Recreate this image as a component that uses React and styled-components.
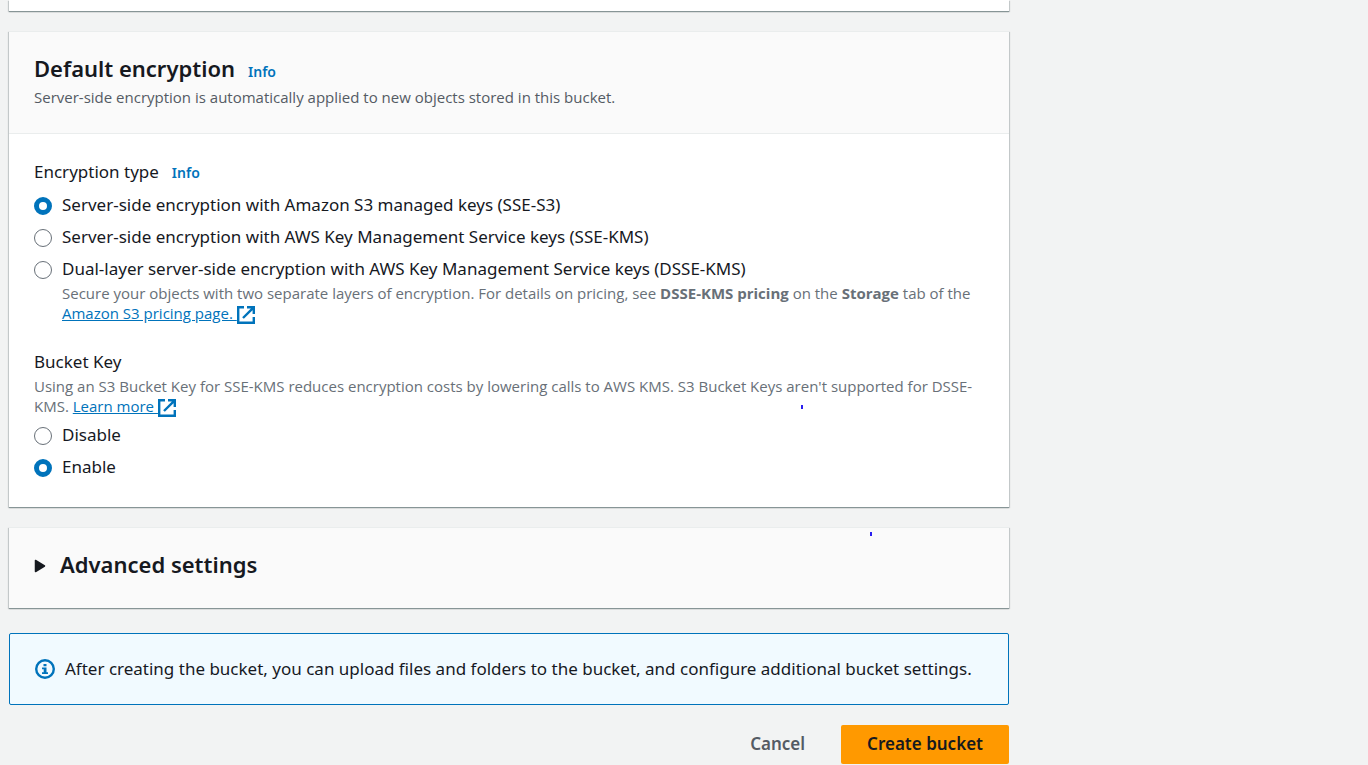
import React, {useState} from 'react'
import styled, {createGlobalStyle} from 'styled-components'

const App = () => {
    const [encryption, setEncryption] = useState('sse-s3')
    const [bucketKey, setBucketKey] = useState('enable')

    return (
        <Page>
            <GlobalStyle />
            <Content>
                <PreviousCard />
                <Card>
                    <CardHeader>
                        <TitleRow>
                            <Title>Default encryption</Title>
                            <InfoLink href='#encryption-info'>Info</InfoLink>
                        </TitleRow>
                        <Subtitle>Server-side encryption is automatically applied to new objects stored in this bucket.</Subtitle>
                    </CardHeader>
                    <CardBody>
                        <Group>
                            <LegendRow>
                                Encryption type
                                <InfoLink href='#type-info'>Info</InfoLink>
                            </LegendRow>
                            <Options>
                                <Option>
                                    <Radio id='sse-s3' name='encryption' checked={encryption === 'sse-s3'} onChange={() => setEncryption('sse-s3')} />
                                    <Label htmlFor='sse-s3'>Server-side encryption with Amazon S3 managed keys (SSE-S3)</Label>
                                </Option>
                                <Option>
                                    <Radio id='sse-kms' name='encryption' checked={encryption === 'sse-kms'} onChange={() => setEncryption('sse-kms')} />
                                    <Label htmlFor='sse-kms'>Server-side encryption with AWS Key Management Service keys (SSE-KMS)</Label>
                                </Option>
                                <Option>
                                    <Radio id='dsse-kms' name='encryption' checked={encryption === 'dsse-kms'} onChange={() => setEncryption('dsse-kms')} />
                                    <div>
                                        <Label htmlFor='dsse-kms'>Dual-layer server-side encryption with AWS Key Management Service keys (DSSE-KMS)</Label>
                                        <Description>
                                            Secure your objects with two separate layers of encryption. For details on pricing, see <b>DSSE-KMS pricing</b> on the <b>Storage</b> tab of the <TextLink href='#pricing'>Amazon S3 pricing page. <ExternalIcon /></TextLink>
                                        </Description>
                                    </div>
                                </Option>
                            </Options>
                        </Group>
                        <Group>
                            <LegendRow>Bucket Key</LegendRow>
                            <Description>
                                Using an S3 Bucket Key for SSE-KMS reduces encryption costs by lowering calls to AWS KMS. S3 Bucket Keys aren't supported for DSSE-KMS. <TextLink href='#learn-more'>Learn more <ExternalIcon /></TextLink>
                            </Description>
                            <Options $compact>
                                <Option>
                                    <Radio id='disable' name='bucket-key' checked={bucketKey === 'disable'} onChange={() => setBucketKey('disable')} />
                                    <Label htmlFor='disable'>Disable</Label>
                                </Option>
                                <Option>
                                    <Radio id='enable' name='bucket-key' checked={bucketKey === 'enable'} onChange={() => setBucketKey('enable')} />
                                    <Label htmlFor='enable'>Enable</Label>
                                </Option>
                            </Options>
                        </Group>
                    </CardBody>
                    <Mark $right='206px' $top='373px' />
                </Card>
                <Card>
                    <Expander type='button' aria-expanded='false'>
                        <svg width='12' height='14' viewBox='0 0 12 14' aria-hidden='true'>
                            <path d='M1.5 1.5v11l9-5.5z' fill='#16191f' stroke='#16191f' strokeWidth='1.5' strokeLinejoin='round' />
                        </svg>
                        <Title as='span'>Advanced settings</Title>
                    </Expander>
                    <Mark $right='137px' $top='4px' />
                </Card>
                <Alert role='status'>
                    <svg width='20' height='20' viewBox='0 0 20 20' fill='none' aria-hidden='true'>
                        <circle cx='10' cy='10' r='8.8' stroke='#0073bb' strokeWidth='2.4' />
                        <path d='M8.5 5h3v2.3h-3zM7 8.5h4.5v4.7H13V15H7v-1.8h1.7v-2.9H7z' fill='#0073bb' />
                    </svg>
                    <span>After creating the bucket, you can upload files and folders to the bucket, and configure additional bucket settings.</span>
                </Alert>
                <Actions>
                    <Button type='button'>Cancel</Button>
                    <Button type='button' $primary>Create bucket</Button>
                </Actions>
            </Content>
        </Page>
    )
}

export default App

const ExternalIcon = () => (
    <IconSvg width='18' height='18' viewBox='0 0 18 18' fill='none' stroke='#0073bb' strokeWidth='2.4' aria-hidden='true'>
        <path d='M7 1.2H1.2v15.6h15.6V11' />
        <path d='M10 1.2h6.8V8M16.2 1.8L6 12' />
    </IconSvg>
)

const GlobalStyle = createGlobalStyle`
    body {
        margin: 0;
        background-color: #f2f3f3;
    }

    *, *::before, *::after {
        box-sizing: border-box;
    }
`

const Page = styled.main`
    padding: 0 9px;
    font-family: 'Noto Sans', 'Open Sans', sans-serif;
    font-size: 17px;
    line-height: 24px;
    color: #16191f;
`

const Content = styled.div`
    max-width: 1000px;
    display: flex;
    flex-direction: column;
`

const Card = styled.section`
    position: relative;
    margin-bottom: 20px;
    background-color: white;
    border-top: 1px solid #eaeded;
    box-shadow: 0 1px 0 0 #879596, 0 1px 1px 0 rgba(0, 28, 36, .3), 1px 1px 1px 0 rgba(0, 28, 36, .15), -1px 1px 1px 0 rgba(0, 28, 36, .15);
`

// tail end of the section scrolled off above
const PreviousCard = styled(Card)`
    height: 11px;
    border-top: none;
`

const CardHeader = styled.header`
    padding: 21px 25px 26px;
    background-color: #fafafa;
    border-bottom: 1px solid #eaeded;
`

const TitleRow = styled.div`
    display: flex;
    align-items: baseline;
    gap: 13px;
`

const Title = styled.h2`
    margin: 0;
    font-size: 22px;
    line-height: 30px;
    font-weight: 600;
`

const InfoLink = styled.a`
    font-size: 14px;
    font-weight: 600;
    color: #0073bb;
    text-decoration: none;
`

const Subtitle = styled.p`
    margin: 3px 0 0;
    font-family: 'Open Sans', 'Noto Sans', sans-serif;
    font-size: 15px;
    line-height: 20px;
    color: #545b64;
`

const CardBody = styled.div`
    display: flex;
    flex-direction: column;
    gap: 26px;
    padding: 26px 25px 28px;
`

const Group = styled.fieldset`
    margin: 0;
    padding: 0;
    border: none;
    min-width: 0;
`

const LegendRow = styled.legend`
    display: flex;
    align-items: baseline;
    gap: 13px;
    padding: 0;
`

const Options = styled.div`
    display: flex;
    flex-direction: column;
    gap: 8px;
    margin-top: ${props => props.$compact ? '6px' : '8px'};
`

const Option = styled.div`
    display: flex;
    align-items: flex-start;
    gap: 10px;
`

const Radio = styled.input.attrs({type: 'radio'})`
    appearance: none;
    flex: none;
    width: 18px;
    height: 18px;
    margin: 4px 0 0;
    border: ${props => props.checked ? '5px solid #0073bb' : '1px solid #687078'};
    border-radius: 50%;
    background-color: white;
`

const Label = styled.label`
    display: block;
`

const Description = styled.p`
    margin: 2px 0 0;
    font-family: 'Open Sans', 'Noto Sans', sans-serif;
    font-size: 15px;
    line-height: 20px;
    color: #687078;
`

const TextLink = styled.a`
    color: #0073bb;
    white-space: nowrap;
`

const IconSvg = styled.svg`
    vertical-align: middle;
`

const Expander = styled.button`
    display: flex;
    align-items: baseline;
    gap: 14px;
    width: 100%;
    padding: 21px 25px 29px;
    border: none;
    background-color: #fafafa;
    font-family: inherit;
    color: inherit;
    text-align: left;
`

const Alert = styled.div`
    display: flex;
    align-items: center;
    gap: 10px;
    margin-top: 5px;
    padding: 23px 25px;
    border: 1px solid #0073bb;
    border-radius: 2px;
    background-color: #f1faff;
`

const Actions = styled.div`
    display: flex;
    justify-content: flex-end;
    gap: 10px;
    margin-top: 20px;
`

const Button = styled.button`
    padding: 7px 26px 8px;
    border: none;
    border-radius: 2px;
    background-color: ${props => props.$primary ? '#ff9900' : 'transparent'};
    color: ${props => props.$primary ? '#16191f' : '#545b64'};
    font-family: inherit;
    font-size: 17px;
    font-weight: 600;
    line-height: 24px;
`

// stray pen mark lying over a card
const Mark = styled.i`
    position: absolute;
    right: ${props => props.$right};
    top: ${props => props.$top};
    width: 2px;
    height: 4px;
    background-color: #2a1ff0;
`
